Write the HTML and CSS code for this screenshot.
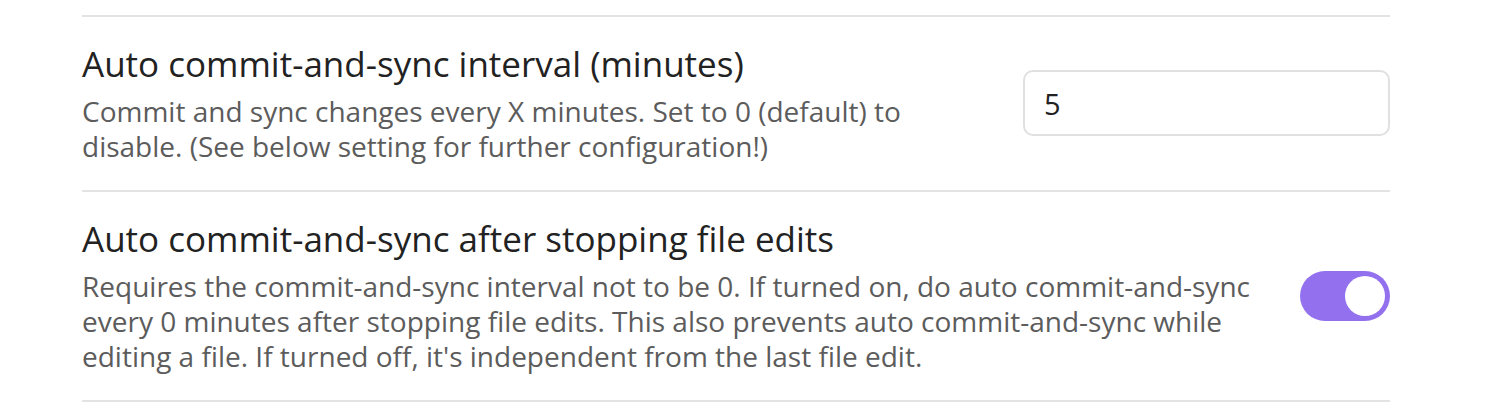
FILE: index.html
```html
<!DOCTYPE html>
<html>
<head>
<meta charset="utf-8">
<link rel="stylesheet" href="styles.css">
</head>
<body>
<div class="settings">
  <div class="setting-item">
    <div class="info">
      <div class="name">Auto commit-and-sync interval (minutes)</div>
      <div class="desc desc-narrow">Commit and sync changes every X minutes. Set to 0 (default) to disable. (See below setting for further configuration!)</div>
    </div>
    <div class="control">
      <input class="text-input" type="text" value="5">
    </div>
  </div>
  <div class="setting-item">
    <div class="info">
      <div class="name">Auto commit-and-sync after stopping file edits</div>
      <div class="desc">Requires the commit-and-sync interval not to be 0. If turned on, do auto commit-and-sync every 0 minutes after stopping file edits. This also prevents auto commit-and-sync while editing a file. If turned off, it's independent from the last file edit.</div>
    </div>
    <div class="control">
      <div class="toggle is-enabled"><div class="knob"></div></div>
    </div>
  </div>
  <div class="end-line"></div>
</div>
</body>
</html>
```
FILE: styles.css
```css
html, body {
  margin: 0;
  padding: 0;
  background: #ffffff;
}
body {
  font-family: "Open Sans", "Noto Sans", sans-serif;
  color: #222222;
}
.settings {
  width: 1308px;
  margin-left: 82px;
  padding-top: 15px;
}
.setting-item {
  display: flex;
  align-items: center;
  border-top: 2px solid #e3e3e3;
  padding: 25px 0 26px;
}
.info {
  flex: 1 1 auto;
  margin-right: 20px;
}
.name {
  font-size: 35px;
  line-height: 44px;
  color: #222222;
}
.desc {
  margin-top: 8px;
  font-size: 28px;
  line-height: 35px;
  color: #5c5c5c;
}
.desc-narrow {
  max-width: 880px;
}
.control {
  flex: 0 0 auto;
  display: flex;
  align-items: center;
}
.text-input {
  box-sizing: border-box;
  width: 367px;
  height: 66px;
  border: 2px solid #e0e0e0;
  border-radius: 10px;
  padding: 0 19px;
  font-family: "Open Sans", "Noto Sans", sans-serif;
  font-size: 29px;
  color: #222222;
  background: #ffffff;
  outline: none;
}
.toggle {
  position: relative;
  width: 90px;
  height: 50px;
  border-radius: 25px;
  background: #9370ee;
}
.knob {
  position: absolute;
  top: 5px;
  right: 5px;
  width: 40px;
  height: 40px;
  border-radius: 50%;
  background: #ffffff;
}
.end-line {
  border-top: 2px solid #e3e3e3;
}
```
